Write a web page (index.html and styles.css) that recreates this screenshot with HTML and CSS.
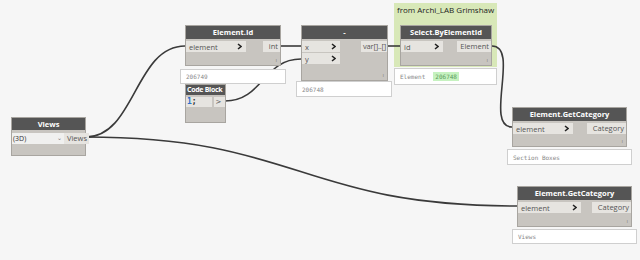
FILE: index.html
```html
<!DOCTYPE html>
<html lang="en">
<head>
    <meta charset="UTF-8">
    <title>Dynamo Graph</title>
    <link rel="stylesheet" href="styles.css">
</head>
<body>
    <div class="canvas">
        <div class="group g-archilab">
            <div class="group-title">from Archi_LAB Grimshaw</div>
        </div>

        <svg class="wires" width="640" height="260" viewBox="0 0 640 260">
            <path d="M86,137 C135,137 135,46 185,46" />
            <path d="M86,137 C300,137 300,206 517,206" />
            <path d="M280,46 L301,46" />
            <path d="M225,101 C263,101 263,59 301,59" />
            <path d="M387,46 L400,46" />
            <path d="M492,46 C520,46 484,127 512,127" />
        </svg>

        <!-- Views -->
        <div class="node n-views">
            <div class="node-head">Views</div>
            <div class="node-body">
                <div class="ports-in">
                    <div class="dropdown">(3D)<span class="caret">⌄</span></div>
                </div>
                <div class="ports-out"><div class="port-out">Views</div></div>
            </div>
        </div>

        <!-- Element.Id -->
        <div class="node n-elementid">
            <div class="node-head">Element.Id</div>
            <div class="node-body">
                <div class="ports-in">
                    <div class="port-in">element<svg class="chev" width="5" height="7" viewBox="0 0 5 7"><polyline points="1,1 4,3.5 1,6" /></svg></div>
                </div>
                <div class="ports-out"><div class="port-out">int</div></div>
            </div>
            <span class="node-info">ı</span>
        </div>
        <div class="preview p-elementid">206749</div>

        <!-- Code Block -->
        <div class="node n-code">
            <div class="node-head">Code Block</div>
            <div class="node-body">
                <div class="code"><span class="num">1</span>;</div>
                <div class="port-out code-out">&gt;</div>
            </div>
        </div>

        <!-- minus -->
        <div class="node n-minus">
            <div class="node-head">-</div>
            <div class="node-body">
                <div class="ports-in">
                    <div class="port-in">x<svg class="chev" width="5" height="7" viewBox="0 0 5 7"><polyline points="1,1 4,3.5 1,6" /></svg></div>
                    <div class="port-in">y<svg class="chev" width="5" height="7" viewBox="0 0 5 7"><polyline points="1,1 4,3.5 1,6" /></svg></div>
                </div>
                <div class="ports-out"><div class="port-out">var[]..[]</div></div>
            </div>
            <span class="node-info">ı</span>
        </div>
        <div class="preview p-minus">206748</div>

        <!-- Select.ByElementId -->
        <div class="node n-select">
            <div class="node-head">Select.ByElementId</div>
            <div class="node-body">
                <div class="ports-in">
                    <div class="port-in">id<svg class="chev" width="5" height="7" viewBox="0 0 5 7"><polyline points="1,1 4,3.5 1,6" /></svg></div>
                </div>
                <div class="ports-out"><div class="port-out">Element</div></div>
            </div>
            <span class="node-info">ı</span>
        </div>
        <div class="preview p-select">Element <span class="hl">206748</span></div>

        <!-- Element.GetCategory 1 -->
        <div class="node n-cat1">
            <div class="node-head">Element.GetCategory</div>
            <div class="node-body">
                <div class="ports-in">
                    <div class="port-in">element<svg class="chev" width="5" height="7" viewBox="0 0 5 7"><polyline points="1,1 4,3.5 1,6" /></svg></div>
                </div>
                <div class="ports-out"><div class="port-out">Category</div></div>
            </div>
            <span class="node-info">ı</span>
        </div>
        <div class="preview p-cat1">Section Boxes</div>

        <!-- Element.GetCategory 2 -->
        <div class="node n-cat2">
            <div class="node-head">Element.GetCategory</div>
            <div class="node-body">
                <div class="ports-in">
                    <div class="port-in">element<svg class="chev" width="5" height="7" viewBox="0 0 5 7"><polyline points="1,1 4,3.5 1,6" /></svg></div>
                </div>
                <div class="ports-out"><div class="port-out">Category</div></div>
            </div>
            <span class="node-info">ı</span>
        </div>
        <div class="preview p-cat2">Views</div>
    </div>
</body>
</html>
```

FILE: styles.css
```css
body {
    margin: 0;
    padding: 0;
    background-color: #f6f6f6;
    font-family: 'Open Sans', 'Liberation Sans', sans-serif;
}
.canvas {
    position: relative;
    width: 640px;
    height: 260px;
    overflow: hidden;
    background-color: #f6f6f6;
}
.wires {
    position: absolute;
    left: 0;
    top: 0;
    z-index: 2;
}
.wires path {
    fill: none;
    stroke: #3a3a3a;
    stroke-width: 1.6;
}
.group {
    position: absolute;
    background-color: #d8e8b8;
    z-index: 1;
}
.g-archilab {
    left: 394px;
    top: 3px;
    width: 103px;
    height: 64px;
}
.group-title {
    font-size: 8px;
    color: #222;
    padding: 1px 0 0 3px;
}
.node {
    position: absolute;
    background-color: #c8c5c0;
    border: 1px solid #a8a5a0;
    box-sizing: border-box;
    z-index: 3;
}
.node-head {
    height: 13px;
    line-height: 13px;
    background-color: #555555;
    color: #ffffff;
    font-size: 7.5px;
    font-weight: bold;
    text-align: center;
    white-space: nowrap;
    overflow: visible;
}
.node-body {
    display: flex;
    justify-content: space-between;
    align-items: flex-start;
    padding-top: 2px;
}
.ports-in {
    display: flex;
    flex-direction: column;
    gap: 1px;
}
.port-in {
    display: flex;
    justify-content: space-between;
    align-items: center;
    height: 11px;
    padding: 0 4px 0 3px;
    background-color: #e6e4e0;
    color: #555;
    font-size: 7.5px;
    box-sizing: border-box;
}
.chev polyline {
    fill: none;
    stroke: #222;
    stroke-width: 1.5;
}
.port-out {
    height: 11px;
    line-height: 11px;
    padding: 0 2px 0 3px;
    background-color: #e6e4e0;
    color: #555;
    font-size: 7.5px;
    text-align: right;
    white-space: nowrap;
}
.node-info {
    position: absolute;
    right: 3px;
    bottom: 1px;
    font-size: 6px;
    color: #8a8782;
}
.preview {
    position: absolute;
    background-color: #ffffff;
    border: 1px solid #cfcfcf;
    box-sizing: border-box;
    font-family: 'DejaVu Sans Mono', 'Liberation Mono', monospace;
    font-size: 6px;
    color: #888;
    padding-left: 5px;
    display: flex;
    align-items: center;
    gap: 8px;
    z-index: 3;
}
.hl {
    background-color: #c6f2c0;
    color: #5a9a5a;
    padding: 1px 2px;
}

/* Views */
.n-views {
    left: 11px;
    top: 117px;
    width: 75px;
    height: 39px;
}
.n-views .node-head {
    height: 12px;
    line-height: 12px;
}
.n-views .node-body {
    padding-top: 3px;
}
.dropdown {
    width: 52px;
    height: 11px;
    line-height: 11px;
    background-color: #f0f0ef;
    font-size: 7px;
    color: #333;
    padding-left: 1px;
    box-sizing: border-box;
    display: flex;
    justify-content: space-between;
}
.caret {
    font-size: 6px;
    color: #777;
    padding-right: 2px;
}

/* Element.Id */
.n-elementid {
    left: 185px;
    top: 25px;
    width: 96px;
    height: 41px;
}
.n-elementid .port-in { width: 60px; }
.n-elementid .port-out { width: 12px; }
.p-elementid {
    left: 180px;
    top: 69px;
    width: 106px;
    height: 15px;
}

/* Code Block */
.n-code {
    left: 185px;
    top: 84px;
    width: 41px;
    height: 39px;
}
.n-code .node-head {
    height: 10px;
    line-height: 10px;
    font-size: 7px;
    letter-spacing: -0.3px;
    text-align: left;
    padding-left: 1px;
}
.n-code .node-body {
    padding-top: 2px;
}
.code {
    width: 26px;
    height: 10px;
    line-height: 10px;
    background-color: #e6e4e0;
    font-family: 'DejaVu Sans Mono', 'Liberation Mono', monospace;
    font-size: 8px;
    font-weight: bold;
    color: #333;
    padding-left: 1px;
    box-sizing: border-box;
}
.num {
    color: #2b6fc9;
}
.code-out {
    width: 11px;
    height: 10px;
    line-height: 10px;
    font-family: 'DejaVu Sans', sans-serif;
    font-size: 7px;
    padding: 0 2px 0 0;
    box-sizing: border-box;
    text-align: center;
}

/* minus */
.n-minus {
    left: 301px;
    top: 25px;
    width: 87px;
    height: 56px;
}
.n-minus .port-in { width: 38px; }
.n-minus .port-out {
    padding: 0 1px 0 2px;
    letter-spacing: -0.2px;
}
.p-minus {
    left: 296px;
    top: 81px;
    width: 96px;
    height: 16px;
}

/* Select.ByElementId */
.n-select {
    left: 400px;
    top: 25px;
    width: 92px;
    height: 41px;
}
.n-select .port-in { width: 42px; }
.n-select .port-out { width: 29px; }
.p-select {
    left: 394px;
    top: 68px;
    width: 103px;
    height: 17px;
}

/* Element.GetCategory */
.n-cat1 {
    left: 512px;
    top: 107px;
    width: 115px;
    height: 40px;
}
.n-cat1 .port-in { width: 60px; }
.n-cat1 .port-out { width: 34px; }
.p-cat1 {
    left: 507px;
    top: 149px;
    width: 125px;
    height: 16px;
}
.n-cat2 {
    left: 517px;
    top: 186px;
    width: 115px;
    height: 41px;
}
.n-cat2 .port-in { width: 63px; }
.n-cat2 .port-out { width: 34px; }
.p-cat2 {
    left: 512px;
    top: 229px;
    width: 125px;
    height: 15px;
}
```
